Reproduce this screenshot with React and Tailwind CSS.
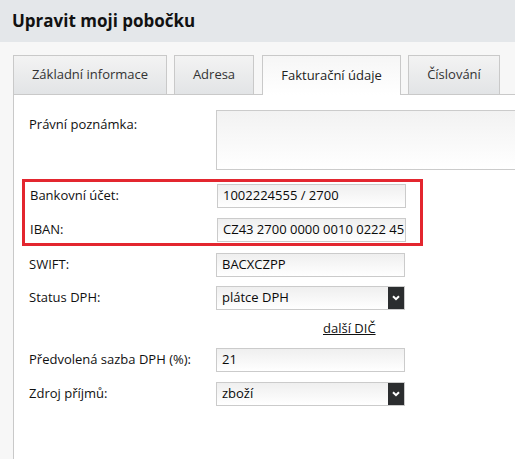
import React from 'react';

const font = { fontFamily: '"Open Sans", "Noto Sans", sans-serif' };

const tabs = [
  { label: 'Základní informace', w: 'w-[154px]' },
  { label: 'Adresa', w: 'w-[80px]' },
  { label: 'Fakturační údaje', w: 'w-[139px]', active: true },
  { label: 'Číslování', w: 'w-[92px]' },
];

const Field = ({ value }) => (
  <div className="w-[189px] h-[24px] border border-[#cbcbcb] bg-gradient-to-b from-[#efefef] to-white flex items-center pl-[5px] text-[13px] text-[#0a0a0a] whitespace-nowrap overflow-hidden">
    {value}
  </div>
);

const Select = ({ value }) => (
  <div className="w-[189px] h-[24px] border border-[#cbcbcb] bg-gradient-to-b from-[#efefef] to-white flex items-center text-[13px] text-[#0a0a0a]">
    <span className="flex-1 pl-[5px]">{value}</span>
    <span className="w-[16px] h-full bg-[#2b2d2f] flex items-center justify-center">
      <svg width="8" height="6" viewBox="0 0 8 6">
        <path d="M1 1.2 L4 4.2 L7 1.2" stroke="white" strokeWidth="2" fill="none" />
      </svg>
    </span>
  </div>
);

const Row = ({ label, children, className = '' }) => (
  <div className={`flex items-center ${className}`}>
    <div className="w-[187px] text-[13px] text-[#111]">{label}</div>
    {children}
  </div>
);

export default function App() {
  return (
    <div className="w-[515px] h-[459px] bg-[#f7f7f7] overflow-hidden flex flex-col" style={font}>
      {/* Header */}
      <div className="h-[42px] bg-[#e4e7ea] flex items-center px-[12px] shrink-0">
        <h1 className="text-[17px] font-bold text-[#111]">Upravit moji pobočku</h1>
      </div>

      {/* Tabs */}
      <div className="flex items-end gap-[7px] pl-[13px] mt-[13px] h-[39px] shrink-0">
        {tabs.map((t) =>
          t.active ? (
            <div
              key={t.label}
              className={`${t.w} h-[40px] -mb-px relative z-10 ml-px border border-b-0 border-[#c9c9c9] bg-gradient-to-b from-[#f6f6f6] to-white flex items-center justify-center text-[13px] text-[#222]`}
            >
              {t.label}
            </div>
          ) : (
            <div
              key={t.label}
              className={`${t.w} h-[39px] border border-b-0 border-[#c9c9c9] bg-gradient-to-b from-[#f3f3f3] to-[#e2e4e6] flex items-center justify-center text-[13px] text-[#333]`}
            >
              {t.label}
            </div>
          )
        )}
      </div>

      {/* Panel */}
      <div className="ml-[13px] flex-1 bg-white border-t border-l border-[#c9c9c9] pt-[15px]">
        <div className="flex pl-[15px]">
          <div className="w-[187px] text-[13px] text-[#111] pt-[5px]">Právní poznámka:</div>
          <div className="flex-1 h-[60px] border border-r-0 border-[#cbcbcb] bg-gradient-to-b from-[#f2f2f2] to-white" />
        </div>

        <div className="ml-[8px] mt-[9px] w-[401px] border-[3px] border-[#e3262f] pl-[5px] pt-[2px] pb-[1px]">
          <Row label="Bankovní účet:">
            <Field value="1002224555 / 2700" />
          </Row>
          <Row label="IBAN:" className="mt-[10px]">
            <Field value="CZ43 2700 0000 0010 0222 45" />
          </Row>
        </div>

        <div className="pl-[15px]">
          <Row label="SWIFT:" className="mt-[7px]">
            <Field value="BACXCZPP" />
          </Row>
          <Row label="Status DPH:" className="mt-[9px]">
            <Select value="plátce DPH" />
          </Row>
          <div className="h-[38px] flex items-center pl-[294px]">
            <a className="text-[13px] text-[#111] underline">další DIČ</a>
          </div>
          <Row label="Předvolená sazba DPH (%):">
            <Field value="21" />
          </Row>
          <Row label="Zdroj příjmů:" className="mt-[10px]">
            <Select value="zboží" />
          </Row>
        </div>
      </div>
    </div>
  );
}
